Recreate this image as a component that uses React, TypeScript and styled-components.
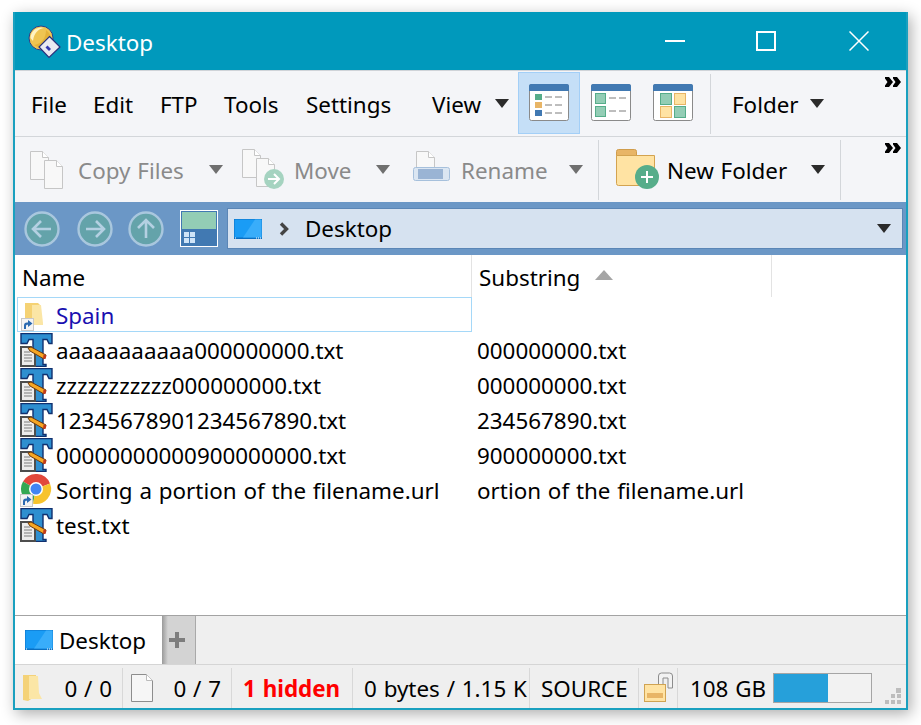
import styled, { createGlobalStyle, css } from "styled-components";

const FONT = `"Noto Sans", "Open Sans", sans-serif`;

const GlobalStyle = createGlobalStyle`
  html, body {
    margin: 0;
    padding: 0;
    background: #fff;
    font-family: ${FONT};
    font-size: 22.4px;
    word-spacing: 1px;
  }
`;

const rows = [
  { name: "aaaaaaaaaaa000000000.txt", sub: "000000000.txt", icon: "text" },
  { name: "zzzzzzzzzzz000000000.txt", sub: "000000000.txt", icon: "text" },
  { name: "12345678901234567890.txt", sub: "234567890.txt", icon: "text" },
  { name: "00000000000900000000.txt", sub: "900000000.txt", icon: "text" },
  { name: "Sorting a portion of the filename.url", sub: "ortion of the filename.url", icon: "chrome" },
  { name: "test.txt", sub: "", icon: "text" },
];

function Caret({ dim }: { dim?: boolean }) {
  return (
    <svg width="14" height="9" viewBox="0 0 14 9">
      <path d="M0 0h14L7 9z" fill={dim ? "#6f6f6f" : "#2b2b2b"} />
    </svg>
  );
}

function AppIcon() {
  return (
    <svg width="34" height="34" viewBox="0 0 34 34">
      <circle cx="13" cy="13" r="12" fill="#efc552" stroke="#27408f" strokeWidth="1" />
      <path d="M2.500 13A10.500 10.500 0 0 1 16 3c-6 1-10 5-11 13z" fill="#fff3c2" />
      <path d="M6 20c7-1 12-6 12-15 4 3 6 8 4 13l-8 6z" fill="#e0a92f" opacity=".7" />
      <path d="M21.500 11.500L32 22 21 32.500 11 22z" fill="#e9e9f1" stroke="#28307c" strokeWidth="1.200" />
      <path d="M19.500 20.500l3.500 3.500-2 2-3.500-3.500z" fill="#3539b0" />
    </svg>
  );
}

function ListIconA() {
  return (
    <svg width="40" height="38" viewBox="0 0 40 38">
      <rect x=".5" y=".5" width="39" height="36" rx="2" fill="#fff" stroke="#8a8a8a" />
      <path d="M0 7V2a2 2 0 0 1 2-2h36a2 2 0 0 1 2 2v5z" fill="#4179b2" />
      <rect x="6" y="10" width="7" height="6" fill="#56ad8a" />
      <rect x="6" y="18" width="7" height="6" fill="#e8b566" />
      <rect x="6" y="26" width="7" height="6" fill="#4179b2" />
      <path d="M16 13h7m3 0h7M16 21h7m3 0h7M16 29h7m3 0h7" stroke="#7d7d7d" strokeWidth="1" />
    </svg>
  );
}

function ListIconB() {
  return (
    <svg width="40" height="38" viewBox="0 0 40 38">
      <rect x=".5" y=".5" width="39" height="36" rx="2" fill="#fff" stroke="#8a8a8a" />
      <path d="M0 7V2a2 2 0 0 1 2-2h36a2 2 0 0 1 2 2v5z" fill="#4179b2" />
      <rect x="4.500" y="9.500" width="10" height="10" fill="#93cdb5" stroke="#56ad8a" />
      <rect x="4.500" y="22.500" width="10" height="10" fill="#93cdb5" stroke="#56ad8a" />
      <path d="M18 14h7m3 0h7M18 27h7m3 0h7" stroke="#7d7d7d" strokeWidth="1" />
    </svg>
  );
}

function ListIconC() {
  return (
    <svg width="40" height="38" viewBox="0 0 40 38">
      <rect x=".5" y=".5" width="39" height="36" rx="2" fill="#fff" stroke="#8a8a8a" />
      <path d="M0 7V2a2 2 0 0 1 2-2h36a2 2 0 0 1 2 2v5z" fill="#4179b2" />
      <rect x="7.500" y="9.500" width="11" height="11" fill="#93cdb5" stroke="#56ad8a" />
      <rect x="21.500" y="9.500" width="11" height="11" fill="#ffe3a3" stroke="#e8b566" />
      <rect x="7.500" y="22.500" width="11" height="11" fill="#ffe3a3" stroke="#e8b566" />
      <rect x="21.500" y="22.500" width="11" height="11" fill="#93cdb5" stroke="#56ad8a" />
    </svg>
  );
}

function Overflow() {
  return (
    <svg width="16" height="10" viewBox="0 0 16 10">
      <path d="M0 0h4l4 5-4 5H0V8.500L2.500 5 0 1.500zM8 0h4l4 5-4 5H8V8.500L10.500 5 8 1.500z" fill="#000" />
    </svg>
  );
}

const sheet = "M.5 .5h12l6 6v22h-18z";

function Sheet({ x, y }: { x: number; y: number }) {
  return (
    <g transform={`translate(${x} ${y})`}>
      <path d={sheet} fill="#f8f8f8" stroke="#c6c6c6" />
      <path d="M12.500 .5v6h6" fill="#fff" stroke="#c6c6c6" />
    </g>
  );
}

function CopyIcon() {
  return (
    <svg width="38" height="38" viewBox="0 0 38 38">
      <Sheet x={0} y={0} />
      <Sheet x={14} y={9} />
    </svg>
  );
}

function MoveIcon() {
  return (
    <svg width="44" height="42" viewBox="0 0 44 42">
      <Sheet x={0} y={0} />
      <Sheet x={14} y={9} />
      <circle cx="32" cy="30" r="10" fill="#a5d3c0" />
      <path d="M26 30h11m-5-5l5 5-5 5" fill="none" stroke="#fff" strokeWidth="2" />
    </svg>
  );
}

function RenameIcon() {
  return (
    <svg width="38" height="38" viewBox="0 0 38 38">
      <Sheet x={3} y={0} />
      <rect x=".5" y="16.500" width="36" height="13" rx="2" fill="#dbe6f2" stroke="#a6c0dc" />
      <rect x="5" y="18" width="25" height="10" fill="#9ab4d4" />
    </svg>
  );
}

function NewFolderIcon() {
  return (
    <svg width="44" height="42" viewBox="0 0 44 42">
      <path d="M.5 7V2.500a2 2 0 0 1 2-2h16a2 2 0 0 1 2 2V7z" fill="#e8b566" stroke="#d09d4c" />
      <path d="M.5 6.500h38v30h-36a2 2 0 0 1-2-2z" fill="#ffe3a3" stroke="#d3a350" />
      <circle cx="31" cy="28" r="12" fill="#56ad8a" />
      <path d="M31 22v12M25 28h12" stroke="#fff" strokeWidth="2" />
    </svg>
  );
}

function NavIcon({ dir }: { dir: "left" | "right" | "up" }) {
  const d =
    dir === "left"
      ? "M27 18H10m7-8l-8 8 8 8"
      : dir === "right"
        ? "M9 18h17m-7-8l8 8-8 8"
        : "M18 27V10m-8 7l8-8 8 8";
  return (
    <svg width="36" height="36" viewBox="0 0 36 36">
      <circle cx="18" cy="18" r="16.500" fill="#64a3aa" stroke="#a9c7de" strokeWidth="2.400" />
      <path d={d} fill="none" stroke="#b4d0e2" strokeWidth="2.600" />
    </svg>
  );
}

function PaneIcon() {
  return (
    <svg width="38" height="37" viewBox="0 0 38 37">
      <rect x=".5" y=".5" width="37" height="36" fill="#4179b2" stroke="#fff" />
      <rect x="2" y="2" width="34" height="17" fill="#93cdb5" />
      <path d="M4 22h5v5H4zM10 22h5v5h-5zM4 28h5v5H4zM10 28h5v5h-5z" fill="#cfe4f7" />
    </svg>
  );
}

function DesktopIcon({ width = 28 }: { width?: number }) {
  return (
    <svg width={width} height={(width * 20) / 28} viewBox="0 0 28 20">
      <rect width="28" height="20" fill="#0a6fc2" />
      <rect x=".5" y=".5" width="27" height="18" fill="#1a9cf5" />
      <path d="M9 18.500L21 .5h6.500v18z" fill="#39adfa" />
      <path d="M1 19h2M22 19h5" stroke="#fff" strokeWidth="1" strokeDasharray="1 1" />
    </svg>
  );
}

function Chevron() {
  return (
    <svg width="10" height="14" viewBox="0 0 10 14">
      <path d="M2 1.500l5.500 5.500L2 12.500" fill="none" stroke="#444" strokeWidth="3.400" />
    </svg>
  );
}

function ShortcutBadge() {
  return (
    <g>
      <rect x=".5" y=".5" width="12" height="12" fill="#f4f4f4" stroke="#c8c8c8" />
      <path d="M3 11V7.500c0-2 1-3 3-3h1V2l4.500 3.500L7 9V6.800H6.500C5.500 6.800 5 7.300 5 8.300V11z" fill="#2a69b0" />
    </g>
  );
}

function SpainFolderIcon() {
  return (
    <svg width="34" height="34" viewBox="0 0 34 34">
      <path d="M4 5h13l2 2v20H8l-4-2z" fill="#f5d274" />
      <path d="M11 7h9l2 18v2H11z" fill="#fbe6a6" />
      <g transform="translate(0 20)">
        <ShortcutBadge />
      </g>
    </svg>
  );
}

function TextFileIcon() {
  return (
    <svg width="34" height="34" viewBox="0 0 34 34">
      <path
        d="M1 .5h31v10h-3l-2-4h-4v25h3v2H9v-2h4v-25H9l-2 4H1z"
        fill="#2e8fd0"
        stroke="#10306f"
        strokeWidth="1.400"
      />
      <path d="M1 14h10l4 4v15H1z" fill="#ececec" stroke="#4d4d4d" strokeWidth="2" />
      <path d="M4 19h6M4 22h8M4 25h8M4 28h8" stroke="#7d7d7d" strokeWidth="1" />
      <path d="M8 15l3-1 15 8-2 4-14-8z" fill="#f5a623" stroke="#6d3a10" strokeWidth="1" />
      <path d="M23.500 21.500l3 1-1 3.500-2.500-.5z" fill="#c23a1a" />
    </svg>
  );
}

function ChromeIcon() {
  return (
    <svg width="34" height="34" viewBox="0 0 34 34">
      <g transform="translate(1 1)">
        <path d="M15 15L29 9.500A15 15 0 0 0 2 7.500z" fill="#e2483c" />
        <path d="M15 15L2 7.500A15 15 0 0 0 12 29.700z" fill="#34a853" />
        <path d="M15 15L12 29.700A15 15 0 0 0 29 9.500z" fill="#f7c32d" />
        <circle cx="15" cy="15" r="7" fill="#fff" />
        <circle cx="15" cy="15" r="5.500" fill="#4285f4" />
      </g>
      <g transform="translate(0 21)">
        <ShortcutBadge />
      </g>
    </svg>
  );
}

function PlainDoc() {
  return (
    <svg width="22" height="28" viewBox="0 0 22 28">
      <path d="M.5 .5h15l6 6v21H.5z" fill="#f6f6f6" stroke="#8d8d8d" />
      <path d="M15.500 .5v6h6" fill="#fff" stroke="#bbb" />
    </svg>
  );
}

function StatusFolder() {
  return (
    <svg width="20" height="28" viewBox="0 0 20 28">
      <path d="M0 1h13v21l-8 5-5-1z" fill="#f4d278" />
      <path d="M6 2h9l1 17 3 6H6z" fill="#fbe6a6" />
    </svg>
  );
}

function LockIcon() {
  return (
    <svg width="30" height="31" viewBox="0 0 30 31">
      <path d="M14.500 13V4a3 3 0 0 1 3-3h8a3 3 0 0 1 3 3v12h-4.500V6h-5v7z" fill="#f2f2f2" stroke="#8c8c8c" />
      <rect x=".5" y="12.500" width="21" height="17" fill="#ffe3a3" stroke="#d0a352" />
      <rect x="3" y="21" width="16" height="5" fill="#e8b566" />
    </svg>
  );
}

function Grip() {
  return (
    <svg width="17" height="17" viewBox="0 0 17 17">
      <path d="M11 0h5v5h-5zM6 6h4v4H6zM12 6h4v4h-4zM0 12h4v4H0zM6 12h4v4H6zM12 12h4v4h-4z" fill="#bdbdbd" />
    </svg>
  );
}

export default function App() {
  return (
    <Page>
      <GlobalStyle />
      <Window>
        <TitleBar>
          <TitleIcon>
            <AppIcon />
          </TitleIcon>
          <TitleText>Desktop</TitleText>
          <Controls>
            <ControlSlot>
              <svg width="20" height="2" viewBox="0 0 20 2">
                <rect width="20" height="2" fill="#fff" />
              </svg>
            </ControlSlot>
            <ControlSlot>
              <svg width="20" height="20" viewBox="0 0 20 20">
                <rect x="1" y="1" width="18" height="18" fill="none" stroke="#fff" strokeWidth="2" />
              </svg>
            </ControlSlot>
            <ControlSlot>
              <svg width="20" height="20" viewBox="0 0 20 20">
                <path d="M.5 .5l19 19M19.500 .5l-19 19" stroke="#fff" strokeWidth="1.500" />
              </svg>
            </ControlSlot>
          </Controls>
        </TitleBar>

        <MenuBar>
          <MenuItem $w={62}>File</MenuItem>
          <MenuItem $w={67}>Edit</MenuItem>
          <MenuItem $w={64}>FTP</MenuItem>
          <MenuItem $w={82}>Tools</MenuItem>
          <MenuItem $w={126}>Settings</MenuItem>
          <MenuItem $w={63}>View</MenuItem>
          <CaretSlot $w={23}>
            <Caret />
          </CaretSlot>
          <ViewButton $active>
            <ListIconA />
          </ViewButton>
          <ViewButton>
            <ListIconB />
          </ViewButton>
          <ViewButton>
            <ListIconC />
          </ViewButton>
          <Divider $ml={6} $mr={21} />
          <MenuItem $w={78}>Folder</MenuItem>
          <CaretSlot $w={15}>
            <Caret />
          </CaretSlot>
          <OverflowMark>
            <Overflow />
          </OverflowMark>
        </MenuBar>

        <ToolBar>
          <ToolIcon $w={48}>
            <CopyIcon />
          </ToolIcon>
          <ToolLabel $w={131} $dim>
            Copy Files
          </ToolLabel>
          <CaretSlot $w={33}>
            <Caret dim />
          </CaretSlot>
          <ToolIcon $w={52}>
            <MoveIcon />
          </ToolIcon>
          <ToolLabel $w={82} $dim>
            Move
          </ToolLabel>
          <CaretSlot $w={37}>
            <Caret dim />
          </CaretSlot>
          <ToolIcon $w={48}>
            <RenameIcon />
          </ToolIcon>
          <ToolLabel $w={108} $dim>
            Rename
          </ToolLabel>
          <CaretSlot $w={15}>
            <Caret dim />
          </CaretSlot>
          <Divider $ml={14} $mr={17} />
          <ToolIcon $w={51}>
            <NewFolderIcon />
          </ToolIcon>
          <ToolLabel $w={144}>New Folder</ToolLabel>
          <CaretSlot $w={15}>
            <Caret />
          </CaretSlot>
          <Divider $ml={14} $mr={0} />
          <OverflowMark>
            <Overflow />
          </OverflowMark>
        </ToolBar>

        <AddressBar>
          <NavSlot $w={53}>
            <NavIcon dir="left" />
          </NavSlot>
          <NavSlot $w={51}>
            <NavIcon dir="right" />
          </NavSlot>
          <NavSlot $w={51}>
            <NavIcon dir="up" />
          </NavSlot>
          <PaneSlot>
            <PaneIcon />
          </PaneSlot>
          <AddressField>
            <DesktopIcon />
            <ChevronSlot>
              <Chevron />
            </ChevronSlot>
            <AddressText>Desktop</AddressText>
            <CaretSlot $w={15}>
              <Caret />
            </CaretSlot>
          </AddressField>
        </AddressBar>

        <ListHeader>
          <HeaderCell $w={457}>Name</HeaderCell>
          <HeaderCell $w={300}>
            Substring
            <SortArrow>
              <svg width="18" height="10" viewBox="0 0 18 10">
                <path d="M9 0l9 10H0z" fill="#a5a5a5" />
              </svg>
            </SortArrow>
          </HeaderCell>
        </ListHeader>

        <FileList>
          <FolderRow>
            <FolderIconSlot>
              <SpainFolderIcon />
            </FolderIconSlot>
            <FolderName>Spain</FolderName>
          </FolderRow>
          {rows.map((row) => (
            <FileRow key={row.name}>
              <NameCell>
                <RowIcon>{row.icon === "chrome" ? <ChromeIcon /> : <TextFileIcon />}</RowIcon>
                <FileName>{row.name}</FileName>
              </NameCell>
              <SubCell>{row.sub}</SubCell>
            </FileRow>
          ))}
        </FileList>

        <TabBar>
          <Tab>
            <DesktopIcon />
            <TabLabel>Desktop</TabLabel>
          </Tab>
          <AddTab>
            <svg width="16" height="16" viewBox="0 0 16 16">
              <path d="M8 0v16M0 8h16" stroke="#7d7d7d" strokeWidth="4" />
            </svg>
          </AddTab>
        </TabBar>

        <StatusBar>
          <StatusCell $w={108} $pl={8}>
            <StatusFolder />
            <StatusCount>0 / 0</StatusCount>
          </StatusCell>
          <StatusCell $w={109} $pl={8}>
            <PlainDoc />
            <StatusCount>0 / 7</StatusCount>
          </StatusCell>
          <StatusCell $w={121} $pl={11}>
            <HiddenText>1 hidden</HiddenText>
          </StatusCell>
          <StatusCell $w={177} $pl={11}>
            <StatusText>0 bytes / 1.15 K</StatusText>
          </StatusCell>
          <StatusCell $w={109} $pl={11}>
            <StatusText>SOURCE</StatusText>
          </StatusCell>
          <StatusCell $w={39} $pl={5}>
            <LockIcon />
          </StatusCell>
          <DriveCell>
            <DriveText>108 GB</DriveText>
            <DriveMeter>
              <DriveFill style={{ width: `${(54 / 97) * 100}%` }} />
            </DriveMeter>
            <GripSlot>
              <Grip />
            </GripSlot>
          </DriveCell>
        </StatusBar>
      </Window>
    </Page>
  );
}

/* the screenshot's text sits a pixel lower in its line box than Noto's does */
const textLine = css`
  line-height: 30px;
  padding-top: 2px;
  color: #000;
`;

const Page = styled.div`
  min-height: 100vh;
  box-sizing: border-box;
  padding: 12px 0 0 13px;
  background: #fff;
  overflow: hidden;
`;

const Window = styled.div`
  box-sizing: border-box;
  width: 895px;
  height: 698px;
  border: 2px solid #1aa0bf;
  border-top: 0;
  display: flex;
  flex-direction: column;
  background: #fff;
  box-shadow: 3px 4px 14px rgba(0, 0, 0, 0.32);
  overflow: hidden;
`;

const TitleBar = styled.header`
  flex: none;
  height: 59px;
  display: flex;
  align-items: center;
  background: #0099bc;
  color: #fff;
  box-sizing: border-box;
  border-bottom: 1px solid #cfd3d8;
  margin: 0 -2px;
  padding-left: 15px;
`;

const TitleIcon = styled.div`
  display: flex;
  width: 38px;
  margin-top: 2px;
`;

const TitleText = styled.div`
  line-height: 30px;
  margin-top: 4px;
`;

const Controls = styled.div`
  margin-left: auto;
  display: flex;
  height: 100%;
  margin-right: 2px;
`;

const ControlSlot = styled.div`
  width: 91px;
  display: flex;
  align-items: center;
  justify-content: center;
  &:last-child {
    width: 95px;
  }
`;

const MenuBar = styled.nav`
  flex: none;
  position: relative;
  height: 66px;
  box-sizing: border-box;
  display: flex;
  align-items: center;
  padding-left: 16px;
  background: #f4f5f8;
  border-bottom: 1px solid #d3d6da;
`;

const MenuItem = styled.div<{ $w: number }>`
  ${textLine}
  width: ${(p) => p.$w}px;
  flex: none;
`;

const CaretSlot = styled.div<{ $w: number }>`
  width: ${(p) => p.$w}px;
  flex: none;
  display: flex;
  align-items: center;
`;

const ViewButton = styled.div<{ $active?: boolean }>`
  width: 62px;
  height: 62px;
  flex: none;
  box-sizing: border-box;
  margin-top: -1px;
  display: flex;
  align-items: center;
  justify-content: center;
  background: ${(p) => (p.$active ? "#c5dff7" : "transparent")};
  border: 1px solid ${(p) => (p.$active ? "#a3cff7" : "transparent")};
`;

const Divider = styled.div<{ $ml: number; $mr: number }>`
  flex: none;
  width: 1px;
  height: 60px;
  background: #d3d6da;
  margin-left: ${(p) => p.$ml}px;
  margin-right: ${(p) => p.$mr}px;
`;

const OverflowMark = styled.div`
  position: absolute;
  top: 6px;
  right: 5px;
  display: flex;
`;

const ToolBar = styled(MenuBar)`
  height: 65px;
  padding-left: 15px;
  border-bottom: 0;
`;

const ToolIcon = styled.div<{ $w: number }>`
  width: ${(p) => p.$w}px;
  flex: none;
  display: flex;
`;

const ToolLabel = styled.div<{ $w: number; $dim?: boolean }>`
  ${textLine}
  width: ${(p) => p.$w}px;
  flex: none;
  color: ${(p) => (p.$dim ? "#8a8a8a" : "#000")};
`;

const AddressBar = styled.div`
  flex: none;
  height: 53px;
  display: flex;
  align-items: center;
  box-sizing: border-box;
  background: #6b97c6;
  padding-left: 9px;
  padding-right: 3px;
`;

const NavSlot = styled.div<{ $w: number }>`
  width: ${(p) => p.$w}px;
  flex: none;
  display: flex;
`;

const PaneSlot = styled.div`
  width: 47px;
  flex: none;
  display: flex;
  margin-left: 1px;
`;

const AddressField = styled.div`
  flex: 1;
  height: 41px;
  box-sizing: border-box;
  display: flex;
  align-items: center;
  background: #d6e2f0;
  border: 1px solid #5b86b6;
  padding: 0 10px 0 6px;
`;

const ChevronSlot = styled.div`
  display: flex;
  width: 26px;
  margin-left: 17px;
`;

const AddressText = styled.div`
  flex: 1;
  line-height: 30px;
  color: #000;
`;

const ListHeader = styled.div`
  flex: none;
  height: 42px;
  display: flex;
  background: #fff;
`;

const HeaderCell = styled.div<{ $w: number }>`
  width: ${(p) => p.$w}px;
  flex: none;
  box-sizing: border-box;
  display: flex;
  align-items: center;
  padding: 4px 0 0 7px;
  border-right: 1px solid #e3e3e3;
  line-height: 30px;
  color: #000;
`;

const SortArrow = styled.span`
  display: flex;
  margin-left: 15px;
  margin-top: -6px;
`;

const FileList = styled.div`
  flex: 1;
  min-height: 0;
  background: #fff;
  color: #000;
`;

const FileRow = styled.div`
  height: 35px;
  display: flex;
  align-items: center;
`;

const FolderRow = styled(FileRow)`
  box-sizing: border-box;
  width: 455px;
  margin-left: 2px;
  border: 1px solid #a5d8f8;
`;

const RowIcon = styled.div`
  flex: none;
  display: flex;
  width: 36px;
  margin-left: 3px;
`;

const FolderIconSlot = styled(RowIcon)`
  width: 35px;
`;

const NameCell = styled.div`
  flex: none;
  display: flex;
  align-items: center;
  width: 462px;
  padding-left: 2px;
  box-sizing: border-box;
`;

const FileName = styled.div`
  ${textLine}
  white-space: nowrap;
`;

const FolderName = styled(FileName)`
  color: #1a0fb0;
`;

const SubCell = styled.div`
  ${textLine}
  white-space: nowrap;
`;

const TabBar = styled.div`
  flex: none;
  height: 49px;
  box-sizing: border-box;
  display: flex;
  background: #efefef;
  border-top: 1px solid #a3a3a3;
`;

const Tab = styled.div`
  width: 147px;
  flex: none;
  box-sizing: border-box;
  display: flex;
  align-items: center;
  padding-left: 10px;
  background: #fff;
`;

const TabLabel = styled.div`
  ${textLine}
  margin-left: 6px;
`;

const AddTab = styled.div`
  width: 34px;
  flex: none;
  box-sizing: border-box;
  display: flex;
  align-items: center;
  padding-left: 7px;
  background: linear-gradient(90deg, #9a9a9a 0, #d3d3d3 6px);
  border-right: 1px solid #a9a9a9;
`;

const StatusBar = styled.footer`
  flex: none;
  height: 44px;
  box-sizing: border-box;
  display: flex;
  align-items: center;
  padding-top: 2px;
  background: #efefef;
  border-top: 1px solid #d5d5d5;
`;

const StatusCell = styled.div<{ $w: number; $pl: number }>`
  width: ${(p) => p.$w}px;
  height: 40px;
  flex: none;
  box-sizing: border-box;
  display: flex;
  align-items: center;
  padding-left: ${(p) => p.$pl}px;
  border-right: 1px solid #d8d8d8;
  white-space: nowrap;
`;

const StatusText = styled.div`
  line-height: 30px;
  padding-top: 3px;
  color: #000;
`;

const StatusCount = styled(StatusText)`
  margin-left: auto;
  padding-right: 10px;
`;

const HiddenText = styled(StatusText)`
  font-weight: 700;
  color: #f00;
`;

const DriveCell = styled.div`
  flex: 1;
  height: 40px;
  display: flex;
  align-items: center;
  padding-left: 12px;
  position: relative;
`;

const DriveText = styled(StatusText)`
  width: 83px;
  flex: none;
  white-space: nowrap;
`;

const DriveMeter = styled.div`
  width: 99px;
  height: 30px;
  flex: none;
  box-sizing: border-box;
  border: 1px solid #a5a5a5;
  background: #f2f2f2;
`;

const DriveFill = styled.div`
  height: 100%;
  background: #26a0da;
`;

const GripSlot = styled.div`
  position: absolute;
  right: 4px;
  bottom: 3px;
  display: flex;
`;
